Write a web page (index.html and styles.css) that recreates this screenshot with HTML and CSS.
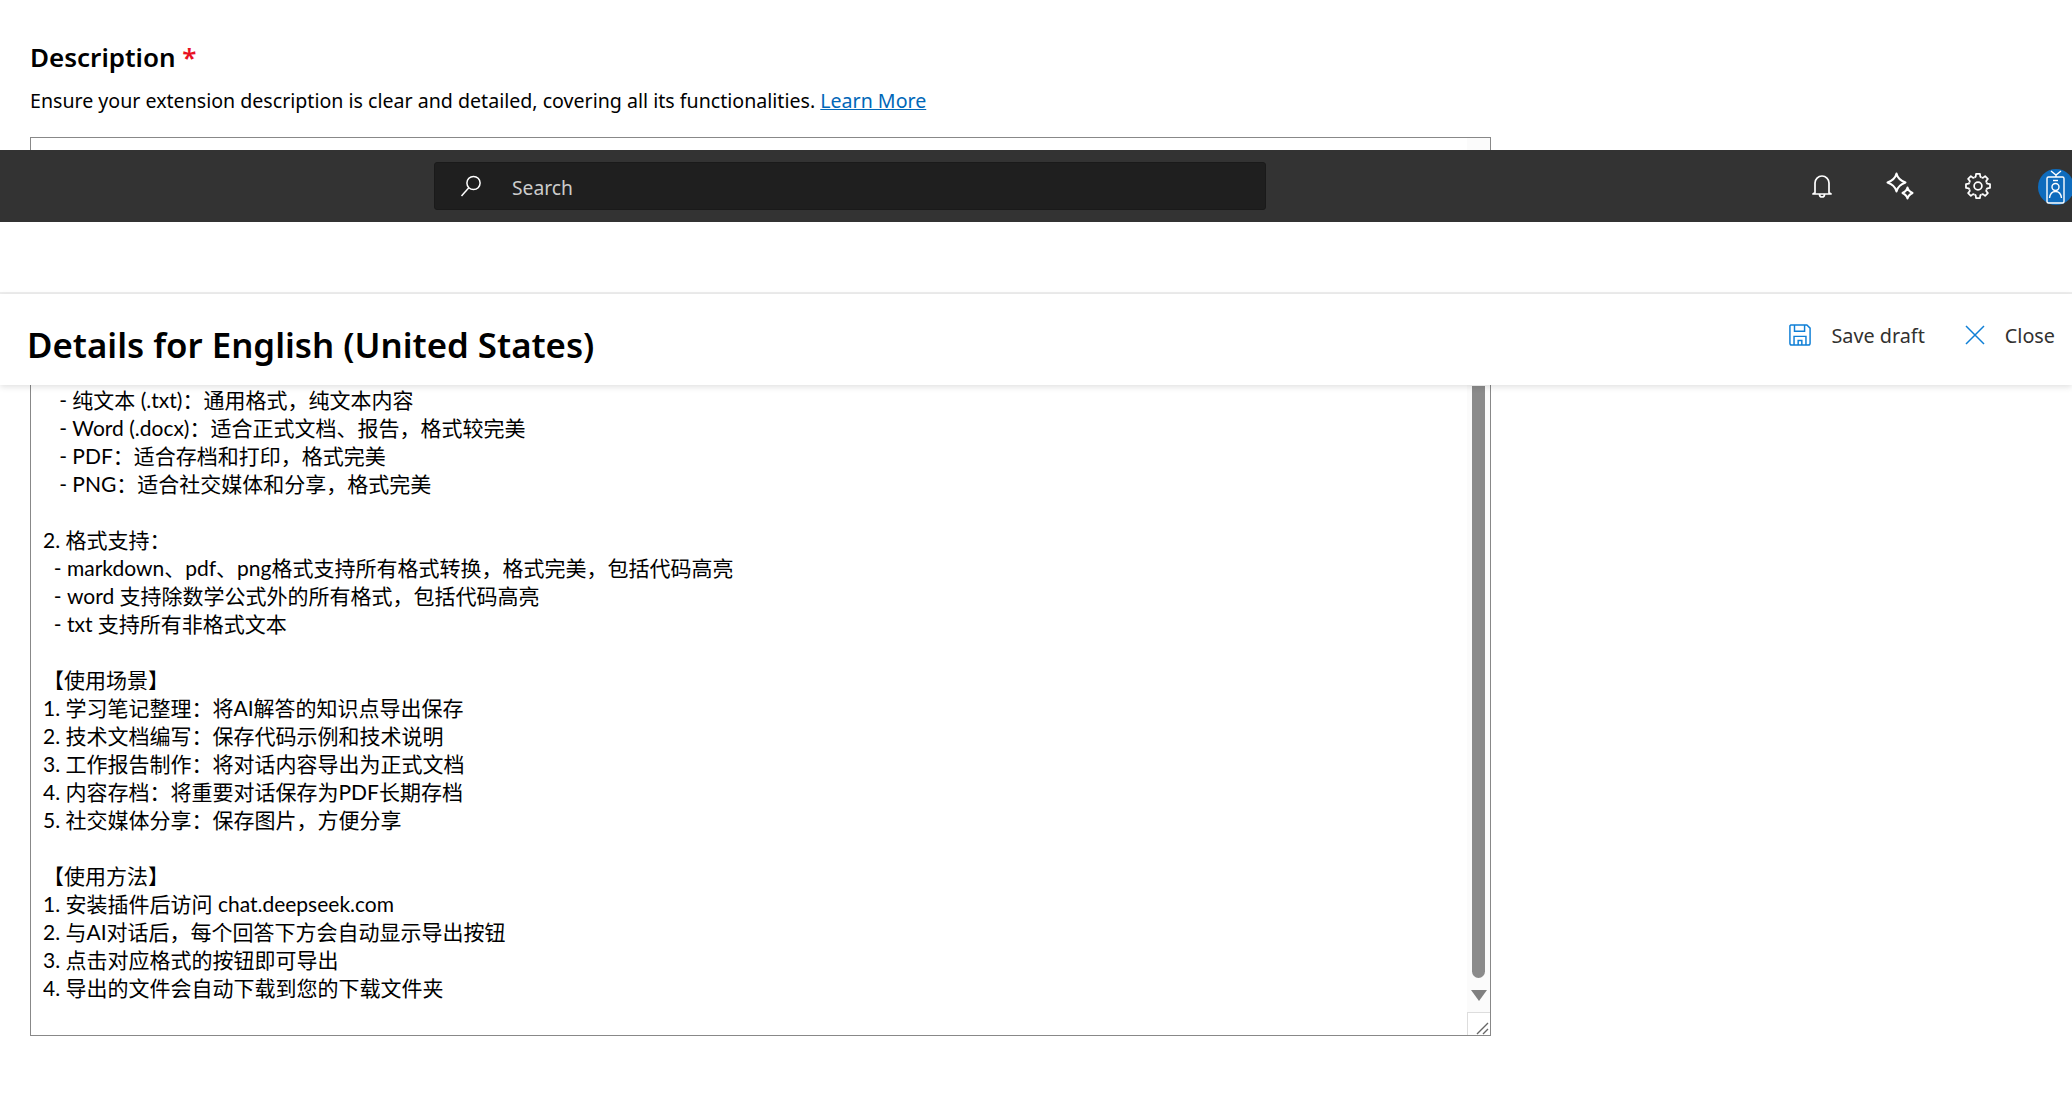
FILE: index.html
```html
<!DOCTYPE html>
<html lang="en">
<head>
    <meta charset="UTF-8">
    <meta name="viewport" content="width=device-width, initial-scale=1.0">
    <title>Details for English (United States)</title>
    <link rel="stylesheet" href="styles.css">
</head>
<body>

    <!-- Form underneath the sticky bars -->
    <div class="form-section">
        <h3 class="field-title">Description <span class="required">*</span></h3>
        <p class="field-help">Ensure your extension description is clear and detailed, covering all its functionalities. <a href="#">Learn More</a></p>
        <div class="desc-box">
            <div class="desc-text">   - 纯文本 (.txt)：通用格式，纯文本内容
   - Word (.docx)：适合正式文档、报告，格式较完美
   - PDF：适合存档和打印，格式完美
   - PNG：适合社交媒体和分享，格式完美

2. 格式支持：
  - markdown、pdf、png格式支持所有格式转换，格式完美，包括代码高亮
  - word 支持除数学公式外的所有格式，包括代码高亮
  - txt 支持所有非格式文本

【使用场景】
1. 学习笔记整理：将AI解答的知识点导出保存
2. 技术文档编写：保存代码示例和技术说明
3. 工作报告制作：将对话内容导出为正式文档
4. 内容存档：将重要对话保存为PDF长期存档
5. 社交媒体分享：保存图片，方便分享

【使用方法】
1. 安装插件后访问 chat.deepseek.com
2. 与AI对话后，每个回答下方会自动显示导出按钮
3. 点击对应格式的按钮即可导出
4. 导出的文件会自动下载到您的下载文件夹</div>
            <div class="scrollbar">
                <div class="scroll-thumb"></div>
                <div class="scroll-arrow"></div>
            </div>
            <div class="resizer">
                <svg width="14" height="14" viewBox="0 0 14 14"><path d="M1 13 12 2M7 13l5-5" stroke="#666" stroke-width="1.4" fill="none"/></svg>
            </div>
        </div>
    </div>

    <!-- Sticky bars on top of the form -->
    <div class="sticky-bars">
        <div class="top-nav">
            <div class="search-box">
                <svg class="search-icon" width="24" height="24" viewBox="0 0 24 24"><circle cx="14.5" cy="9" r="6.6" fill="none" stroke="#fff" stroke-width="1.5"/><path d="M9.8 13.8 2.5 22" stroke="#fff" stroke-width="1.5" fill="none"/></svg>
                <span class="search-label">Search</span>
            </div>
            <div class="nav-icons">
                <div class="nav-icon">
                    <svg width="20" height="24" viewBox="0 0 20 24"><path d="M3 18.500V9a7 7 0 0 1 14 0v9.500l2 1.500H1ZM7.500 20.500a2.500 2.500 0 0 0 5 0" fill="none" stroke="#fff" stroke-width="1.700" stroke-linejoin="round"/></svg>
                </div>
                <div class="nav-icon">
                    <svg width="28" height="28" viewBox="0 0 28 28"><path d="M10.500 1.500c1 4.500 3.500 7 9 9-5.500 2-8 4.500-9 9-1-4.500-3.500-7-9-9 5.500-2 8-4.500 9-9Z" fill="none" stroke="#fff" stroke-width="2" stroke-linejoin="round"/><path d="M21.500 15.500c.5 2.500 2 4 5 5.500-3 1.500-4.500 3-5 5.500-.5-2.500-2-4-5-5.500 3-1.500 4.500-3 5-5.500Z" fill="none" stroke="#fff" stroke-width="2" stroke-linejoin="round"/></svg>
                </div>
                <div class="nav-icon">
                    <svg width="26" height="26" viewBox="0 0 24 24">
                        <defs><path id="gear-tooth" d="M8.750 4.150 9.870 3.460 10.200 .9H13.800L14.130 3.460 15.250 4.150" fill="none" stroke="#fff" stroke-width="1.600" stroke-linejoin="round"/></defs>
                        <use href="#gear-tooth"/>
                        <use href="#gear-tooth" transform="rotate(45 12 12)"/>
                        <use href="#gear-tooth" transform="rotate(90 12 12)"/>
                        <use href="#gear-tooth" transform="rotate(135 12 12)"/>
                        <use href="#gear-tooth" transform="rotate(180 12 12)"/>
                        <use href="#gear-tooth" transform="rotate(225 12 12)"/>
                        <use href="#gear-tooth" transform="rotate(270 12 12)"/>
                        <use href="#gear-tooth" transform="rotate(315 12 12)"/>
                        <circle cx="12" cy="12" r="3.600" fill="none" stroke="#fff" stroke-width="1.600"/>
                    </svg>
                </div>
            </div>
            <div class="avatar">
                <svg width="22" height="34" viewBox="0 0 22 34"><path d="M6 1l5 4 5-4M11 5v2" fill="none" stroke="#fff" stroke-width="1.400"/><rect x="2" y="7" width="17" height="26" rx="1.500" fill="none" stroke="#fff" stroke-width="1.400"/><path d="M8 10.500h5" stroke="#fff" stroke-width="1.400"/><circle cx="10.500" cy="17" r="3.500" fill="none" stroke="#fff" stroke-width="1.400"/><path d="M4.500 28c.5-4 3-6.500 6-6.500s5.500 2.500 6 6.500" fill="none" stroke="#fff" stroke-width="1.400"/></svg>
            </div>
        </div>
        <div class="spacer-bar"></div>
        <div class="details-bar">
            <h1 class="details-title">Details for English (United States)</h1>
            <div class="details-actions">
                <button class="btn-action">
                    <svg width="22" height="22" viewBox="0 0 24 24"><path d="M2 1h17.500L23 4.500V21a2 2 0 0 1-2 2H3a2 2 0 0 1-2-2V2ZM6 1v7h11V1M5.500 23v-9.500h13V23M10 23v-5h4v5" fill="none" stroke="#0f7fd6" stroke-width="1.600"/></svg>
                    Save draft
                </button>
                <button class="btn-action">
                    <svg width="20" height="20" viewBox="0 0 20 20"><path d="M1 1l18 18M19 1 1 19" stroke="#0f7fd6" stroke-width="1.500" fill="none"/></svg>
                    Close
                </button>
            </div>
        </div>
    </div>

</body>
</html>
```

FILE: styles.css
```css
body {
    font-family: "Noto Sans", "Noto Sans CJK SC", sans-serif;
    background-color: #fff;
    color: #000;
    margin: 0;
    padding: 0;
    height: 1097px;
    overflow: hidden;
}

.form-section {
    padding: 40px 581px 0 30px;
}

.field-title {
    font-size: 26px;
    font-weight: 600;
    line-height: 34px;
    margin: 0;
}

.required {
    color: #e81123;
}

.field-help {
    font-size: 19.6px;
    line-height: 28px;
    margin: 13px 0 0;
}

.field-help a {
    color: #0067b8;
}

.desc-box {
    position: relative;
    height: 899px;
    margin-top: 22px;
    border: 1px solid #888;
    box-sizing: border-box;
    padding: 248px 12px 0;
}

.desc-text {
    font-family: "Lato", "Noto Sans CJK SC", sans-serif;
    font-size: 21px;
    line-height: 28px;
    white-space: pre-wrap;
}

.scrollbar {
    position: absolute;
    top: 0;
    right: 0;
    bottom: 0;
    width: 23px;
    background-color: #fbfbfb;
}

.scroll-thumb {
    position: absolute;
    top: 248px;
    left: 5px;
    width: 13px;
    height: 592px;
    background-color: #8b8b8b;
    border-radius: 0 0 7px 7px;
}

.scroll-arrow {
    position: absolute;
    bottom: 34px;
    left: 4px;
    border-left: 8px solid transparent;
    border-right: 8px solid transparent;
    border-top: 11px solid #808080;
}

.resizer {
    position: absolute;
    right: 0;
    bottom: 0;
    width: 23px;
    height: 23px;
    box-sizing: border-box;
    background-color: #fff;
    border-left: 1px solid #ddd;
    border-top: 1px solid #ddd;
    display: flex;
    align-items: flex-end;
    justify-content: flex-end;
}

.sticky-bars {
    position: absolute;
    top: 150px;
    left: 0;
    right: 0;
    overflow: hidden;
}

.top-nav {
    height: 72px;
    background-color: #333;
    display: flex;
    align-items: center;
    padding-left: 434px;
}

.search-box {
    width: 832px;
    height: 48px;
    flex-shrink: 0;
    box-sizing: border-box;
    background-color: #1f1f1f;
    border: 1px solid #1a1a1a;
    border-radius: 3px;
    display: flex;
    align-items: center;
    padding-left: 24px;
    gap: 29px;
}

.search-label {
    color: #ccc;
    font-size: 19.3px;
    padding-top: 2px;
}

.nav-icons {
    display: flex;
    align-items: center;
    gap: 48px;
    margin-left: 541px;
}

.nav-icon {
    width: 30px;
    display: flex;
    justify-content: center;
}

.avatar {
    width: 36px;
    height: 36px;
    flex-shrink: 0;
    margin: 2px 0 0 45px;
    border-radius: 50%;
    background-color: #0f6cbd;
    display: flex;
    align-items: center;
    justify-content: center;
}

.spacer-bar {
    height: 70px;
    background-color: #fff;
    border-bottom: 2px solid #eee;
}

.details-bar {
    height: 91px;
    background-color: #fff;
    box-shadow: 0 2px 6px rgba(0, 0, 0, 0.12);
    display: flex;
    justify-content: space-between;
    align-items: flex-start;
    padding: 0 17px 0 27px;
    margin-bottom: 10px;
}

.details-title {
    font-size: 34.800px;
    font-weight: 600;
    line-height: 48px;
    margin: 27px 0 0;
}

.details-actions {
    display: flex;
    gap: 40px;
    margin-top: 28px;
}

.btn-action {
    font-family: inherit;
    font-size: 19.8px;
    color: #323130;
    background: none;
    border: none;
    padding: 0;
    display: flex;
    align-items: center;
    gap: 20px;
    height: 26px;
}
```
